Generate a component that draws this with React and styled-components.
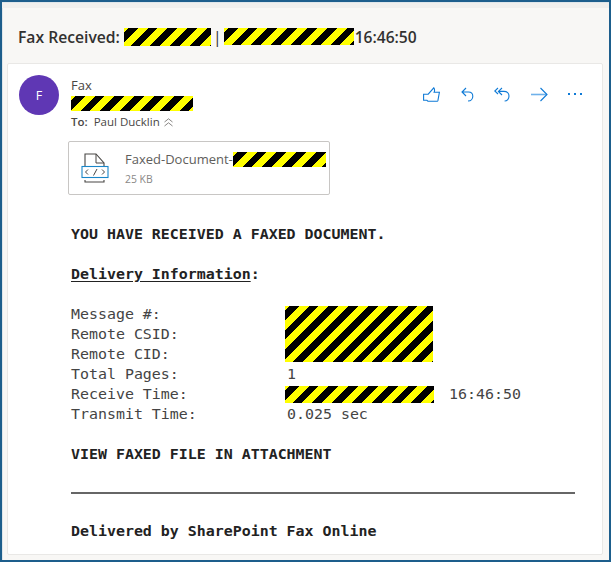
import React from 'react';
import styled, { createGlobalStyle } from 'styled-components';

const Global = createGlobalStyle`
  html, body { margin: 0; padding: 0; background: #fff; }
  * { box-sizing: border-box; }
`;

const Frame = styled.div`
  width: 611px; height: 562px; overflow: hidden;
  border: 2px solid #1d5e8c;
  background: #f8f7f5;
  display: flex; flex-direction: column;
  box-shadow: inset 1px 1px 0 #dfe6ea;
  padding: 0 6px 5px 5px;
  font-family: "Open Sans", "Noto Sans", sans-serif;
`;
const TopStrip = styled.div`
  height: 5px; margin: 1px -6px 0 -5px; background: #f0efed; flex: none;
`;
const TitleBar = styled.div`
  height: 55px; flex: none; display: flex; align-items: center;
  padding: 2px 0 0 11px;
  font-size: 15.7px; font-weight: 600; color: #323130; white-space: nowrap;
`;
const Hazard = styled.span`
  display: inline-block; flex: none;
  width: ${p => p.$w}px; height: ${p => p.$h}px;
  background: repeating-linear-gradient(135deg, #ffff00 0 3px, #000 3px 10px, #ffff00 10px 14px);
`;
const Sep = styled.span`
  font-weight: 400; margin: 0 2px 0 2px;
`;
const TitleTime = styled.span`
  margin-left: 1px; font-size: 15.6px;
`;
const Card = styled.div`
  flex: 1; background: #fff; border: 1px solid #e9e8e6; border-radius: 2px;
  display: flex; flex-direction: column; min-height: 0;
`;
const Header = styled.div`
  display: flex; padding: 11px 20px 0 11px; gap: 12px; height: 77px;
`;
const Avatar = styled.div`
  width: 40px; height: 40px; border-radius: 50%; background: #5f37b4; color: #fff; flex: none;
  display: flex; align-items: center; justify-content: center; font-size: 12.5px;
`;
const Sender = styled.div`
  flex: 1; display: flex; flex-direction: column; align-items: flex-start; color: #484644;
`;
const SenderName = styled.div`
  font-size: 13px; line-height: 20px; margin-bottom: 1px;
`;
const ToLine = styled.div`
  display: flex; align-items: center; font-size: 11.5px; line-height: 16px; margin-top: 3px; gap: 6px;
  b { font-weight: 600; }
  svg { margin-left: -2px; }
`;
const Actions = styled.div`
  display: flex; align-items: center; height: 34px; margin-top: 2px;
  gap: 20.5px; color: #0f7ad6;
  svg { display: block; }
`;
const Attachment = styled.div`
  margin: 0 0 0 60px; width: 262px; height: 54px; flex: none;
  border: 1px solid #c8c6c4; border-radius: 2px;
  display: flex; align-items: center; padding-left: 12px; gap: 16px;
`;
const FileInfo = styled.div`
  display: flex; flex-direction: column; color: #605e5c;
`;
const FileName = styled.div`
  display: flex; align-items: center; font-size: 13px; line-height: 18px;
`;
const FileSize = styled.div`
  font-size: 10.4px; line-height: 14px; margin-top: 4px; color: #8a8886;
`;
const Body = styled.div`
  padding: 29px 0 0 63px; width: 568px;
  font-family: "DejaVu Sans Mono", monospace; font-size: 14.93px; line-height: 20px; color: #444;
`;
const Strong = styled.div`
  font-weight: 700; color: #222; margin-bottom: ${p => p.$mb || 0}px;
  u { text-underline-offset: 2px; }
`;
const Table = styled.div`
  display: grid; grid-template-columns: 214px 1fr; grid-auto-rows: 20px; margin-bottom: 20px;
`;
const Value = styled.div`
  padding-left: 2px;
`;
const Redacted = styled.div`
  grid-row: span 3; display: flex; align-items: center;
`;
const TimeCell = styled.div`
  display: flex; align-items: center; gap: 15px;
`;
const Rule = styled.hr`
  border: 0; height: 2px; background: #666; margin: 28px 0 27px; width: 504px;
`;

const Like = () => (
  <svg width="17" height="15" viewBox="0 0 17 15" fill="none" stroke="currentColor" strokeWidth="1.1">
    <path d="M.6 7.2h4.6L10.8.8c1 1.4 1.1 2.6.3 4.5h5.3l-1.5 8.4c-.1.3-.3.5-.6.5H4.9l-1-.9H.6z" />
  </svg>
);
const Reply = () => (
  <svg width="13" height="15" viewBox="0 0 13 15" fill="none" stroke="currentColor" strokeWidth="1.1">
    <path d="M5 1 1 5l4 4M1 5h6.5c2.6 0 4.3 1.6 4.3 4.2S10 14 7 14" />
  </svg>
);
const ReplyAll = () => (
  <svg width="16" height="15" viewBox="0 0 16 15" fill="none" stroke="currentColor" strokeWidth="1.1">
    <path d="M4 1 .8 4 4 7M8 1 4.4 4.4 8 8M4.4 4.4h5.4c3.4 0 5.2 1.7 5.2 4.6S13.2 14 10.6 14" />
  </svg>
);
const Forward = () => (
  <svg width="17" height="15" viewBox="0 0 17 15" fill="none">
    <path d="M0 7.5h15.6" stroke="#6fb1ea" strokeWidth="1.6" />
    <path d="M9.5 1 16 7.5 9.5 14" stroke="currentColor" strokeWidth="1.1" />
  </svg>
);
const More = () => (
  <svg width="14" height="4" viewBox="0 0 14 4" fill="currentColor">
    <rect x="0" y="1" width="2" height="2" /><rect x="6" y="1" width="2" height="2" /><rect x="12" y="1" width="2" height="2" />
  </svg>
);
const Chevrons = () => (
  <svg width="9" height="9" viewBox="0 0 9 9" fill="none" stroke="#7a7876" strokeWidth="0.9">
    <path d="M.5 4 4.5 .8 8.5 4M.5 8 4.5 4.8 8.5 8" />
  </svg>
);
const FileIcon = () => (
  <svg width="28" height="30" viewBox="0 0 28 30" fill="none">
    <path d="M4 13V1h11l8 9v3M4 27v2h19v-2" stroke="#484644" strokeWidth="1.1" fill="#fff" />
    <path d="M15 1v9h8" stroke="#484644" strokeWidth="1" />
    <rect x="1" y="13.5" width="26" height="11" fill="#fff" stroke="#1a86c8" strokeWidth="1.1" />
    <path d="M7 16.5 4.5 19 7 21.5M21 16.5 23.5 19 21 21.5M16 16l-3.5 6.5" stroke="#484644" strokeWidth="1" />
  </svg>
);

export default function App() {
  return (
    <Frame>
      <Global />
      <TopStrip />
      <TitleBar>
        Fax Received:&nbsp;<Hazard $w={87} $h={18} /><Sep>|</Sep><Hazard $w={130} $h={17} /><TitleTime>16:46:50</TitleTime>
      </TitleBar>
      <Card>
        <Header>
          <Avatar>F</Avatar>
          <Sender>
            <SenderName>Fax</SenderName>
            <Hazard $w={122} $h={15} />
            <ToLine><b>To:</b> Paul Ducklin <Chevrons /></ToLine>
          </Sender>
          <Actions>
            <Like /><Reply /><ReplyAll /><Forward /><More />
          </Actions>
        </Header>
        <Attachment>
          <FileIcon />
          <FileInfo>
            <FileName>Faxed-Document-<Hazard $w={93} $h={15} /></FileName>
            <FileSize>25 KB</FileSize>
          </FileInfo>
        </Attachment>
        <Body>
          <Strong $mb={20}>YOU HAVE RECEIVED A FAXED DOCUMENT.</Strong>
          <Strong $mb={20}><u>Delivery Information</u>:</Strong>
          <Table>
            <div>Message #:</div>
            <Redacted><Hazard $w={148} $h={56} /></Redacted>
            <div>Remote CSID:</div>
            <div>Remote CID:</div>
            <div>Total Pages:</div>
            <Value>1</Value>
            <div>Receive Time:</div>
            <TimeCell><Hazard $w={149} $h={17} />16:46:50</TimeCell>
            <div>Transmit Time:</div>
            <Value>0.025 sec</Value>
          </Table>
          <Strong>VIEW FAXED FILE IN ATTACHMENT</Strong>
          <Rule />
          <Strong>Delivered by SharePoint Fax Online</Strong>
        </Body>
      </Card>
    </Frame>
  );
}
